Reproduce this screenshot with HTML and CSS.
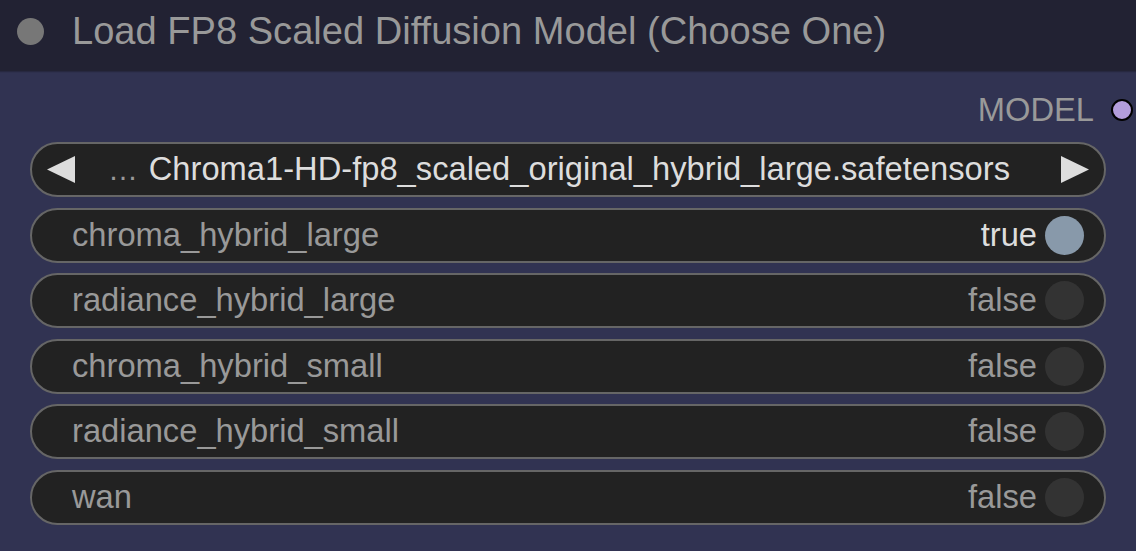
FILE: index.html
```html
<!DOCTYPE html>
<html>
<head>
<meta charset="utf-8">
<link rel="stylesheet" href="styles.css">
</head>
<body>
<div class="node">
  <div class="title">
    <span class="title-dot"></span>
    <span class="title-text">Load FP8 Scaled Diffusion Model (Choose One)</span>
  </div>
  <div class="node-body">
    <div class="outputs">
      <span class="out-label">MODEL</span>
      <span class="out-dot"></span>
    </div>
    <div class="widgets">
      <div class="widget combo">
        <svg class="arrow" width="28" height="27" viewBox="0 0 28 27"><polygon points="28,0 0,13.5 28,27" fill="#dddddd"/></svg>
        <span class="combo-label">…</span>
        <span class="combo-value">Chroma1-HD-fp8_scaled_original_hybrid_large.safetensors</span>
        <svg class="arrow" width="28" height="27" viewBox="0 0 28 27"><polygon points="0,0 28,13.5 0,27" fill="#dddddd"/></svg>
      </div>
      <div class="widget toggle">
        <span class="w-label">chroma_hybrid_large</span>
        <span class="w-value on">true</span>
        <span class="knob on"></span>
      </div>
      <div class="widget toggle">
        <span class="w-label">radiance_hybrid_large</span>
        <span class="w-value">false</span>
        <span class="knob"></span>
      </div>
      <div class="widget toggle">
        <span class="w-label">chroma_hybrid_small</span>
        <span class="w-value">false</span>
        <span class="knob"></span>
      </div>
      <div class="widget toggle">
        <span class="w-label">radiance_hybrid_small</span>
        <span class="w-value">false</span>
        <span class="knob"></span>
      </div>
      <div class="widget toggle">
        <span class="w-label">wan</span>
        <span class="w-value">false</span>
        <span class="knob"></span>
      </div>
    </div>
  </div>
</div>
</body>
</html>
```
FILE: styles.css
```css
html, body {
  margin: 0;
  padding: 0;
  background: #313352;
}
body {
  width: 1136px;
  height: 551px;
  overflow: hidden;
  font-family: "Liberation Sans", Arial, sans-serif;
}
.node {
  width: 1136px;
  height: 551px;
  display: flex;
  flex-direction: column;
  background: #313352;
}
.title {
  height: 71px;
  box-sizing: border-box;
  flex: none;
  background: #222233;
  display: flex;
  align-items: center;
  padding-left: 17px;
  padding-bottom: 9px;
  box-shadow: 0 1px 1px rgba(30, 30, 45, 0.5);
  position: relative;
  z-index: 1;
}
.title-dot {
  width: 27px;
  height: 27px;
  border-radius: 50%;
  background: #777777;
  flex: none;
}
.title-text {
  margin-left: 28px;
  font-size: 38.1px;
  line-height: 1;
  color: #999999;
  white-space: nowrap;
}
.node-body {
  display: flex;
  flex-direction: column;
}
.outputs {
  height: 44px;
  margin-top: 17px;
  margin-bottom: 10px;
  display: flex;
  align-items: center;
  justify-content: flex-end;
  padding-right: 3px;
}
.out-label {
  font-size: 32.7px;
  line-height: 1;
  color: #999999;
}
.out-dot {
  width: 18px;
  height: 18px;
  border-radius: 50%;
  background: #b39ddb;
  border: 2px solid #000000;
  margin-left: 17px;
}
.widgets {
  display: flex;
  flex-direction: column;
  gap: 10.5px;
  padding: 0 30px;
}
.widget {
  height: 55px;
  box-sizing: border-box;
  border: 2px solid #666666;
  border-radius: 28px;
  background: #222222;
  display: flex;
  align-items: center;
  font-size: 32.7px;
  line-height: 1;
  white-space: nowrap;
}
.combo {
  padding: 0 15px;
}
.combo-label {
  color: #999999;
  margin-left: 33px;
  font-size: 30px;
}
.combo-value {
  color: #dddddd;
  margin-left: auto;
  margin-right: 51px;
}
.arrow {
  flex: none;
  display: block;
}
.toggle {
  padding: 0 20px 0 40px;
}
.w-label {
  color: #999999;
}
.w-value {
  margin-left: auto;
  color: #999999;
}
.w-value.on {
  color: #dddddd;
}
.knob {
  width: 39px;
  height: 39px;
  border-radius: 50%;
  background: #333333;
  margin-left: 8px;
  flex: none;
}
.knob.on {
  background: #8899aa;
}
```
